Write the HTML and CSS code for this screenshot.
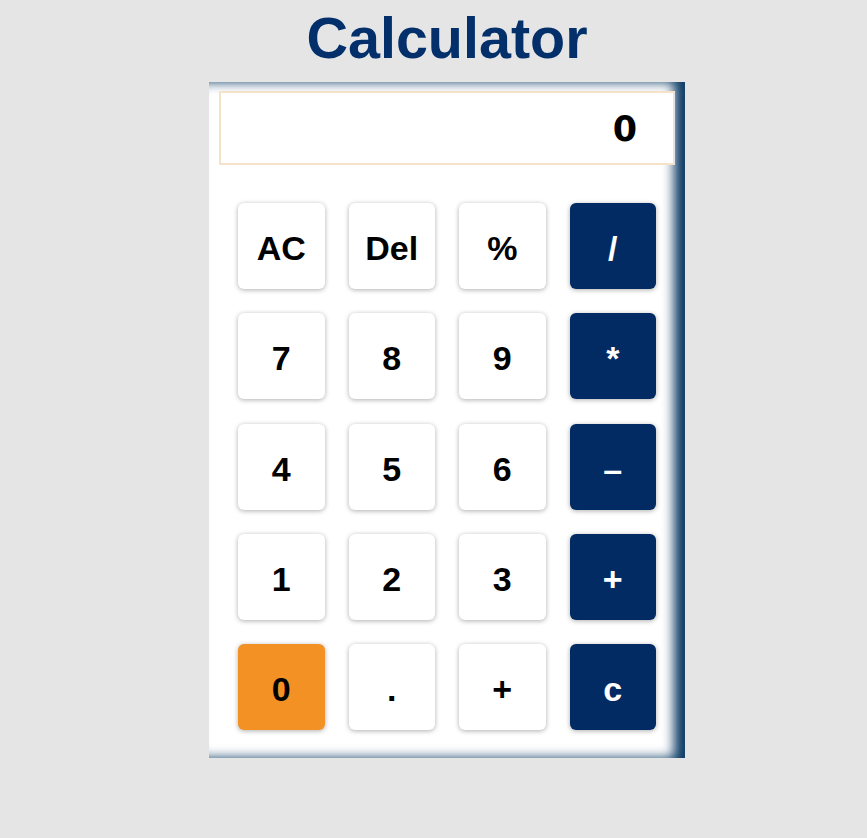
FILE: index.html
```html
<!DOCTYPE html>
<html lang="en">
<head>
<meta charset="utf-8">
<title>Calculator</title>
<link rel="stylesheet" href="styles.css">
</head>
<body>
<main class="page">
  <h1 class="title">Calculator</h1>
  <section class="calculator">
    <div class="display">0</div>
    <div class="keys">
      <button class="key">AC</button>
      <button class="key">Del</button>
      <button class="key">%</button>
      <button class="key op">/</button>
      <button class="key">7</button>
      <button class="key">8</button>
      <button class="key">9</button>
      <button class="key op">*</button>
      <button class="key">4</button>
      <button class="key">5</button>
      <button class="key">6</button>
      <button class="key op">–</button>
      <button class="key">1</button>
      <button class="key">2</button>
      <button class="key">3</button>
      <button class="key op">+</button>
      <button class="key zero">0</button>
      <button class="key">.</button>
      <button class="key">+</button>
      <button class="key op">c</button>
    </div>
  </section>
</main>
</body>
</html>
```

FILE: styles.css
```css
html, body {
  margin: 0;
  padding: 0;
  background: #e5e5e5;
  font-family: "Liberation Sans", Arial, sans-serif;
}

.page {
  display: flex;
  flex-direction: column;
  align-items: center;
  padding: 5px 0 0 27px;
}

.title {
  margin: 0 0 11px;
  font-size: 57.5px;
  font-weight: bold;
  color: #03306b;
  line-height: normal;
}

.calculator {
  box-sizing: border-box;
  width: 476px;
  height: 676px;
  background: #ffffff;
  padding: 9px 10px 28px;
  box-shadow: inset -11px 0 12px #0f3d66;
}

.display {
  box-sizing: border-box;
  height: 74px;
  border: 2px solid #f6e2c8;
  border-right-color: #e4e4e4;
  background: #ffffff;
  text-align: right;
  padding: 3px 36px 0 0;
  font-family: "DejaVu Sans", Verdana, sans-serif;
  font-weight: bold;
  font-size: 35px;
  line-height: 67px;
  color: #000000;
}

.keys {
  display: grid;
  grid-template-columns: repeat(4, 1fr);
  grid-auto-rows: 86px;
  column-gap: 24px;
  row-gap: 24.25px;
  margin: 38px 19px 0;
}

.key {
  border: none;
  border-radius: 6px;
  background: #ffffff;
  color: #000000;
  font-family: "Liberation Sans", Arial, sans-serif;
  font-weight: bold;
  font-size: 34px;
  box-shadow: 0 1px 5px rgba(0, 0, 0, 0.32);
  padding: 5px 0 0;
}

.key.op {
  background: #022b63;
  color: #ffffff;
}

.key.zero {
  background: #f39124;
}
```
